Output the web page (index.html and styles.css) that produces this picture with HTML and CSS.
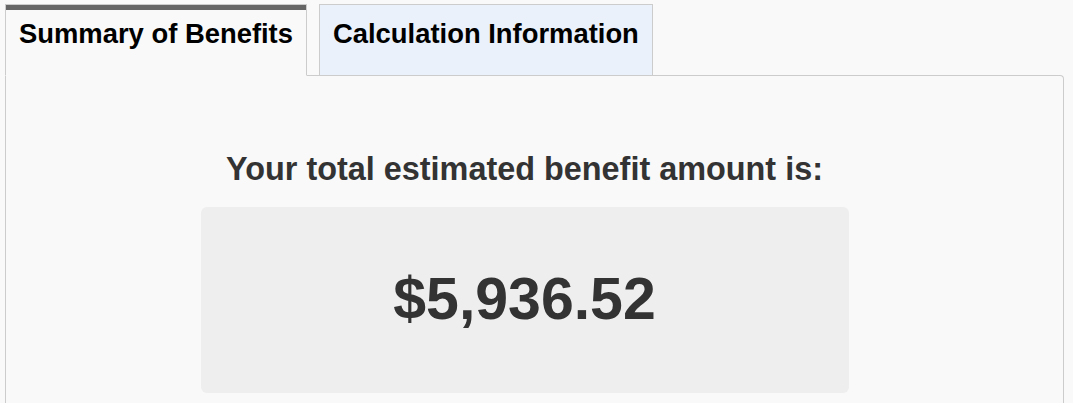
FILE: index.html
```html
<!doctype html>
<html>
  <head>
    <title>Benefit Estimate</title>
    <meta charset="UTF-8" />
    <link rel="stylesheet" href="styles.css">
  </head>

  <body>
    <div class="results">
      <div class="tabs">
        <div class="tab active">Summary of Benefits</div>
        <div class="tab">Calculation Information</div>
      </div>

      <div class="panel">
        <h2 class="total-label">Your total estimated benefit amount is:</h2>
        <div class="total-box">
          <span class="total-amount">$5,936.52</span>
        </div>
      </div>
    </div>
  </body>
</html>
```

FILE: styles.css
```css
html,
body {
  margin: 0;
  padding: 0;
}
body {
  font-family: 'Liberation Sans', Arial, Helvetica, sans-serif;
  background-color: #f9f9f9;
  color: #333333;
}
.results {
  padding: 4px 9px 0 5px;
}
.tabs {
  display: flex;
  gap: 12px;
  margin-bottom: -1px;
  position: relative;
}
.tab {
  font-size: 27.4px;
  font-weight: 700;
  line-height: 31px;
  color: #000000;
  padding: 13px 13px 26px 13px;
  border: 1px solid #cccccc;
  background-color: #eaf1fb;
}
.tab.active {
  background-color: #f9f9f9;
  border-bottom-color: #f9f9f9;
  box-shadow: inset 0 5px 0 #666666;
}
.panel {
  border: 1px solid #cccccc;
  border-bottom: 0;
  border-top-right-radius: 4px;
  padding: 75px 20px 11px 0;
  display: flex;
  flex-direction: column;
  align-items: center;
}
.total-label {
  margin: 0;
  font-size: 32.4px;
  line-height: 37px;
  font-weight: 700;
  color: #333333;
}
.total-box {
  margin-top: 19px;
  width: 648px;
  padding: 58px 0 59px 0;
  background-color: #eeeeee;
  border-radius: 6px;
  text-align: center;
}
.total-amount {
  font-size: 59px;
  line-height: 69px;
  font-weight: 700;
  color: #333333;
}
```
